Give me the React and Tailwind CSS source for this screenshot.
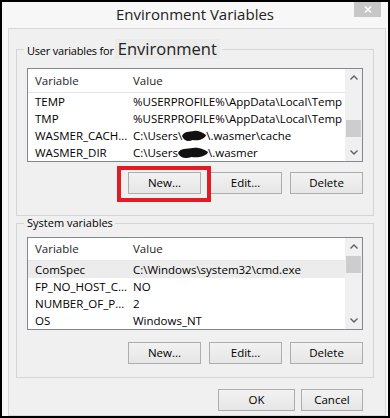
import React from "react";

const FONT = { fontFamily: '"Open Sans", "Noto Sans", sans-serif' };

function Chevron({ up }) {
  return (
    <svg width="8" height="5" viewBox="0 0 8 5">
      <polyline
        points={up ? "0.5,4.5 4,1 7.5,4.5" : "0.5,0.5 4,4 7.5,0.5"}
        fill="none"
        stroke="#606060"
        strokeWidth="1.4"
      />
    </svg>
  );
}

function Blob({ w }) {
  return (
    <svg width={w} height="12" viewBox={`0 0 ${w} 12`} className="inline-block align-middle -mt-[2px]">
      <path
        d={`M0 6 C2 1 ${w * 0.3} 2 ${w * 0.5} 1 C${w * 0.7} 0 ${w - 3} 3 ${w} 5 C${w - 1} 9 ${w * 0.7} 11 ${w * 0.45} 10 C${w * 0.25} 12 2 11 0 6 Z`}
        fill="#111"
      />
    </svg>
  );
}

function Scrollbar({ thumbTop }) {
  return (
    <div className="w-[17px] bg-[#f0f0f0] flex flex-col">
      <div className="h-[17px] flex items-center justify-center">
        <Chevron up />
      </div>
      <div className="flex-1">
        <div className="mx-[1px] h-[17px] bg-[#cdcdcd]" style={{ marginTop: thumbTop }} />
      </div>
      <div className="h-[17px] flex items-center justify-center">
        <Chevron />
      </div>
    </div>
  );
}

function List({ rows, height, thumbTop, highlight }) {
  return (
    <div className="border border-[#828790] bg-white flex" style={{ height }}>
      <div className="flex-1 flex flex-col overflow-hidden">
        <div className="h-[24px] border-b border-[#e5e5e5] flex items-center text-[11.5px] text-[#1e1e1e]">
          <div className="w-[105px] pl-[7px]">Variable</div>
          <div>Value</div>
        </div>
        {rows.map((r, i) => (
          <div
            key={i}
            className={
              "h-[17px] flex items-center text-[11.5px] text-black whitespace-nowrap " +
              (highlight === i ? "bg-[#ececec]" : "")
            }
          >
            <div className="w-[105px] pl-[7px]">{r[0]}</div>
            <div>{r[1]}</div>
          </div>
        ))}
      </div>
      <Scrollbar thumbTop={thumbTop} />
    </div>
  );
}

function Btn({ children, w = "w-[73px]" }) {
  return (
    <div
      className={
        w +
        " h-[22px] border border-[#adadad] bg-gradient-to-b from-[#f2f2f2] to-[#e6e6e6] flex items-center justify-center text-[11.5px] text-black"
      }
    >
      {children}
    </div>
  );
}

export default function App() {
  const userRows = [
    ["TEMP", "%USERPROFILE%\\AppData\\Local\\Temp"],
    ["TMP", "%USERPROFILE%\\AppData\\Local\\Temp"],
    [
      "WASMER_CACH...",
      <span>
        C:\Users\<Blob w={24} />\.wasmer\cache
      </span>,
    ],
    [
      "WASMER_DIR",
      <span>
        C:\Users<Blob w={30} />\.wasmer
      </span>,
    ],
  ];
  const sysRows = [
    ["ComSpec", "C:\\Windows\\system32\\cmd.exe"],
    ["FP_NO_HOST_C...", "NO"],
    ["NUMBER_OF_P...", "2"],
    ["OS", "Windows_NT"],
  ];

  return (
    <div className="w-[390px] h-[418px] border-2 border-black bg-[#f7f7f7] flex flex-col" style={FONT}>
      <div className="h-[26px] relative shrink-0">
        <div className="text-center text-[15px] leading-[24px] text-[#222]">Environment Variables</div>
        <div className="absolute right-[7px] top-0 w-[27px] h-[15px] bg-[#c7c7c7] flex items-center justify-center">
          <svg width="8" height="7" viewBox="0 0 8 7">
            <path d="M1 0.5 L7 6.5 M7 0.5 L1 6.5" stroke="white" strokeWidth="1.5" />
          </svg>
        </div>
      </div>

      <div className="flex-1 ml-[6px] mr-[2px] border border-[#d9d9d9] bg-[#f0f0f0] flex flex-col">
        <fieldset className="mt-[10px] ml-[7px] mr-[11px] border border-[#d5d5d5] px-[10px] pb-[21px]">
          <legend className="-ml-[3px] pl-[3px] pr-[2px] h-[20px] flex items-baseline">
            <span className="text-[11px] leading-[20px] tracking-[-0.2px] text-black">User variables for</span>
            <span className="ml-[1px] px-[3px] bg-[#ebebeb] text-[16.5px] leading-[20px] text-[#222]">Environment</span>
          </legend>
          <div className="mt-[9px]">
            <List rows={userRows} height={94} thumbTop={34} />
          </div>
          <div className="mt-[10px] flex justify-end gap-[8px]">
            <div className="relative">
              <Btn>New...</Btn>
              <div className="absolute -left-[11px] -top-[6px] -right-[10px] -bottom-[8px] border-[4px] border-[#e21c23]" />
            </div>
            <Btn>Edit...</Btn>
            <Btn>Delete</Btn>
          </div>
        </fieldset>

        <fieldset className="ml-[7px] mr-[11px] border border-[#d5d5d5] px-[10px] pb-[13px]">
          <legend className="-ml-[3px] pl-[3px] pr-[2px] h-[14px] text-[11px] leading-[14px] text-black">
            System variables
          </legend>
          <div className="mt-[7px]">
            <List rows={sysRows} height={93} thumbTop={1} highlight={0} />
          </div>
          <div className="mt-[12px] flex justify-end gap-[8px]">
            <Btn>New...</Btn>
            <Btn>Edit...</Btn>
            <Btn>Delete</Btn>
          </div>
        </fieldset>

        <div className="mt-[11px] mr-[22px] flex justify-end gap-[6px]">
          <Btn w="w-[77px]">OK</Btn>
          <Btn w="w-[62px]">Cancel</Btn>
        </div>
      </div>
    </div>
  );
}
